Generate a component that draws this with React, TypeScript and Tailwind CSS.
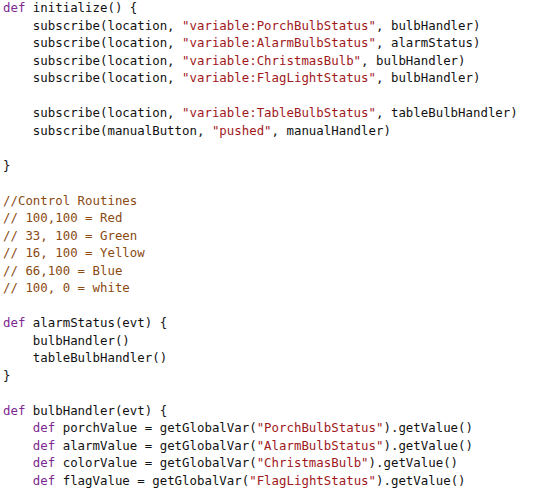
import React from "react";

type Tok = [string, string?];
const K = "text-[#7b2a92]";
const S = "text-[#a0181c]";
const C = "text-[#8a4a12]";

const lines: Tok[][] = [
  [["def", K], [" initialize() {"]],
  [["    subscribe(location, "], ['"variable:PorchBulbStatus"', S], [", bulbHandler)"]],
  [["    subscribe(location, "], ['"variable:AlarmBulbStatus"', S], [", alarmStatus)"]],
  [["    subscribe(location, "], ['"variable:ChristmasBulb"', S], [", bulbHandler)"]],
  [["    subscribe(location, "], ['"variable:FlagLightStatus"', S], [", bulbHandler)"]],
  [],
  [["    subscribe(location, "], ['"variable:TableBulbStatus"', S], [", tableBulbHandler)"]],
  [["    subscribe(manualButton, "], ['"pushed"', S], [", manualHandler)"]],
  [],
  [["}"]],
  [],
  [["//Control Routines", C]],
  [["// 100,100 = Red", C]],
  [["// 33, 100 = Green", C]],
  [["// 16, 100 = Yellow", C]],
  [["// 66,100 = Blue", C]],
  [["// 100, 0 = white", C]],
  [],
  [["def", K], [" alarmStatus(evt) {"]],
  [["    bulbHandler()"]],
  [["    tableBulbHandler()"]],
  [["}"]],
  [],
  [["def", K], [" bulbHandler(evt) {"]],
  [["    "], ["def", K], [" porchValue = getGlobalVar("], ['"PorchBulbStatus"', S], [").getValue()"]],
  [["    "], ["def", K], [" alarmValue = getGlobalVar("], ['"AlarmBulbStatus"', S], [").getValue()"]],
  [["    "], ["def", K], [" colorValue = getGlobalVar("], ['"ChristmasBulb"', S], [").getValue()"]],
  [["    "], ["def", K], [" flagValue = getGlobalVar("], ['"FlagLightStatus"', S], [").getValue()"]],
];

export default function App() {
  return (
    <div className="w-[557px] h-[500px] bg-white overflow-hidden pl-[3px] -mt-[1px]">
      <pre
        className="text-[12.4px] leading-[17.52px] text-[#111111] m-0"
        style={{ fontFamily: '"DejaVu Sans Mono", monospace' }}
      >
        {lines.map((l, i) => (
          <div key={i} className="h-[17.52px] whitespace-pre">
            {l.map((t, j) => (
              <span key={j} className={t[1] ?? ""}>
                {t[0]}
              </span>
            ))}
          </div>
        ))}
      </pre>
    </div>
  );
}
